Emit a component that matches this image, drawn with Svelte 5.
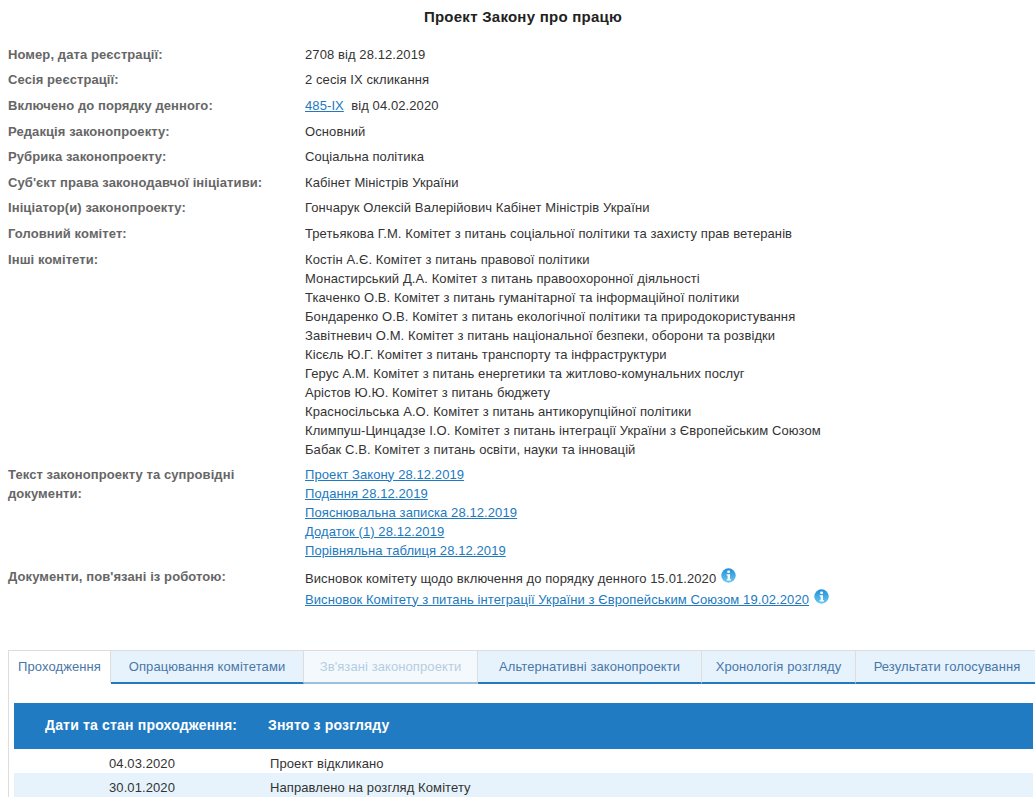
<script>
	const committees = [
		'Костін А.Є. Комітет з питань правової політики',
		'Монастирський Д.А. Комітет з питань правоохоронної діяльності',
		'Ткаченко О.В. Комітет з питань гуманітарної та інформаційної політики',
		'Бондаренко О.В. Комітет з питань екологічної політики та природокористування',
		'Завітневич О.М. Комітет з питань національної безпеки, оборони та розвідки',
		'Кісєль Ю.Г. Комітет з питань транспорту та інфраструктури',
		'Герус А.М. Комітет з питань енергетики та житлово-комунальних послуг',
		'Арістов Ю.Ю. Комітет з питань бюджету',
		'Красносільська А.О. Комітет з питань антикорупційної політики',
		'Климпуш-Цинцадзе І.О. Комітет з питань інтеграції України з Європейським Союзом',
		'Бабак С.В. Комітет з питань освіти, науки та інновацій'
	]
	const docs = [
		'Проект Закону 28.12.2019',
		'Подання 28.12.2019',
		'Пояснювальна записка 28.12.2019',
		'Додаток (1) 28.12.2019',
		'Порівняльна таблиця 28.12.2019'
	]
	const simple = [
		['Редакція законопроекту:', 'Основний'],
		['Рубрика законопроекту:', 'Соціальна політика'],
		['Суб\'єкт права законодавчої ініціативи:', 'Кабінет Міністрів України'],
		['Ініціатор(и) законопроекту:', 'Гончарук Олексій Валерійович Кабінет Міністрів України'],
		['Головний комітет:', 'Третьякова Г.М. Комітет з питань соціальної політики та захисту прав ветеранів']
	]
	const tabs = [
		{ name: 'Опрацювання комітетами', w: 193 },
		{ name: 'Зв\'язані законопроекти', w: 174, off: true },
		{ name: 'Альтернативні законопроекти', w: 224 },
		{ name: 'Хронологія розгляду', w: 154 },
		{ name: 'Результати голосування', w: 183 }
	]
	const history = [
		['04.03.2020', 'Проект відкликано'],
		['30.01.2020', 'Направлено на розгляд Комітету']
	]
</script>

{#snippet info()}
	<svg class="info" width="15" height="15" viewBox="0 0 15 15">
		<defs>
			<linearGradient id="ig" x1="0" y1="0" x2="0" y2="1">
				<stop offset="0" stop-color="#1f8fd8" />
				<stop offset="1" stop-color="#6cc8f2" />
			</linearGradient>
		</defs>
		<circle cx="7.5" cy="7.5" r="7.2" fill="url(#ig)" />
		<rect x="6.2" y="2.4" width="2.8" height="2.6" rx="1" fill="#fff" />
		<path d="M5.6 6.2h3.4v5h1v1.2H5.6v-1.2h1v-3.8h-1z" fill="#fff" />
	</svg>
{/snippet}

<div class="page">
	<h1>Проект Закону про працю</h1>

	<div class="rows">
		<div class="row"><div class="label">Номер, дата реєстрації:</div><div>2708 від 28.12.2019</div></div>
		<div class="row"><div class="label">Сесія реєстрації:</div><div>2 сесія IX скликання</div></div>
		<div class="row"><div class="label">Включено до порядку денного:</div><div><a href="#top">485-IX</a>&nbsp; від 04.02.2020</div></div>
		{#each simple as [label, value]}
			<div class="row"><div class="label">{label}</div><div>{value}</div></div>
		{/each}
		<div class="row">
			<div class="label">Інші комітети:</div>
			<div class="list">
				{#each committees as c}<div>{c}</div>{/each}
			</div>
		</div>
		<div class="row">
			<div class="label wrap">Текст законопроекту та супровідні документи:</div>
			<div class="list">
				{#each docs as d}<div><a href="#top">{d}</a></div>{/each}
			</div>
		</div>
		<div class="row">
			<div class="label related">Документи, пов'язані із роботою:</div>
			<div class="list related-list">
				<div>Висновок комітету щодо включення до порядку денного 15.01.2020 {@render info()}</div>
				<div><a href="#top">Висновок Комітету з питань інтеграції України з Європейським Союзом 19.02.2020</a> {@render info()}</div>
			</div>
		</div>
	</div>

	<div class="tabs-box">
		<div class="tabs">
			<div class="tab active">Проходження</div>
			{#each tabs as t}
				<div class="tab" class:off={t.off} style="width: {t.w}px">{t.name}</div>
			{/each}
		</div>
		<div class="panel">
			<div class="head">
				<div class="head-date">Дати та стан проходження:</div>
				<div>Знято з розгляду</div>
			</div>
			{#each history as [date, text], i}
				<div class="hist" class:odd={i % 2 == 1}>
					<div class="hist-date">{date}</div>
					<div>{text}</div>
				</div>
			{/each}
		</div>
	</div>
</div>

<style>
	:global(body) {
		background: #fff;
		overflow: hidden;
	}
	.page {
		height: 797px;
		overflow: hidden;
		font-family: 'Liberation Sans', Arial, sans-serif;
		font-size: 13px;
		color: #333;
		letter-spacing: 0.09px;
	}
	h1 {
		margin: 0;
		padding: 8px 0 0 11px;
		height: 33.8px;
		font-size: 15px;
		line-height: 17px;
		font-weight: bold;
		text-align: center;
		color: #222;
		letter-spacing: 0.25px;
	}
	.rows {
		padding-left: 8px;
	}
	.row {
		display: grid;
		grid-template-columns: 297px 1fr;
		padding: 3px 0;
		line-height: 19.6px;
	}
	.label {
		font-weight: bold;
		color: #666;
		white-space: nowrap;
	}
	.label.wrap {
		white-space: normal;
		width: 260px;
	}
	.label.related {
		margin-top: 1px;
	}
	.list {
		line-height: 19px;
	}
	.related-list {
		line-height: 21px;
		margin-top: 2px;
	}
	a {
		color: #217ac0;
		text-decoration: underline;
	}
	.info {
		vertical-align: -1px;
		margin-left: 1px;
		position: relative;
		top: -1px;
	}
	.tabs-box {
		margin: 37px 0 0 8px;
		border-top: 1px solid #ddd;
		border-left: 1px solid #ddd;
	}
	.tabs {
		display: flex;
	}
	.tab {
		box-sizing: border-box;
		height: 33px;
		line-height: 32px;
		text-align: center;
		background: #e6f3fd;
		color: #4a76a8;
		border-bottom: 2px solid #217ac0;
		border-right: 1px solid #ddd;
		flex: none;
	}
	.tab.active {
		width: 102px;
		background: #fff;
		color: #4a76a8;
		border-bottom-color: #fff;
	}
	.tab.off {
		background: #f4f9fe;
		color: #b5cde3;
		border-bottom-color: #9dc0dd;
	}
	.panel {
		padding: 19px 2px 0 5px;
	}
	.head {
		display: flex;
		height: 46px;
		line-height: 44px;
		background: #217bc2;
		color: #fff;
		font-weight: bold;
		font-size: 14px;
		letter-spacing: 0.18px;
	}
	.head-date {
		width: 254px;
		padding-left: 31px;
		box-sizing: border-box;
	}
	.hist {
		display: flex;
		height: 24px;
		line-height: 29px;
	}
	.hist.odd {
		background: #e6f3fd;
	}
	.hist-date {
		width: 256px;
		text-align: center;
	}
</style>
